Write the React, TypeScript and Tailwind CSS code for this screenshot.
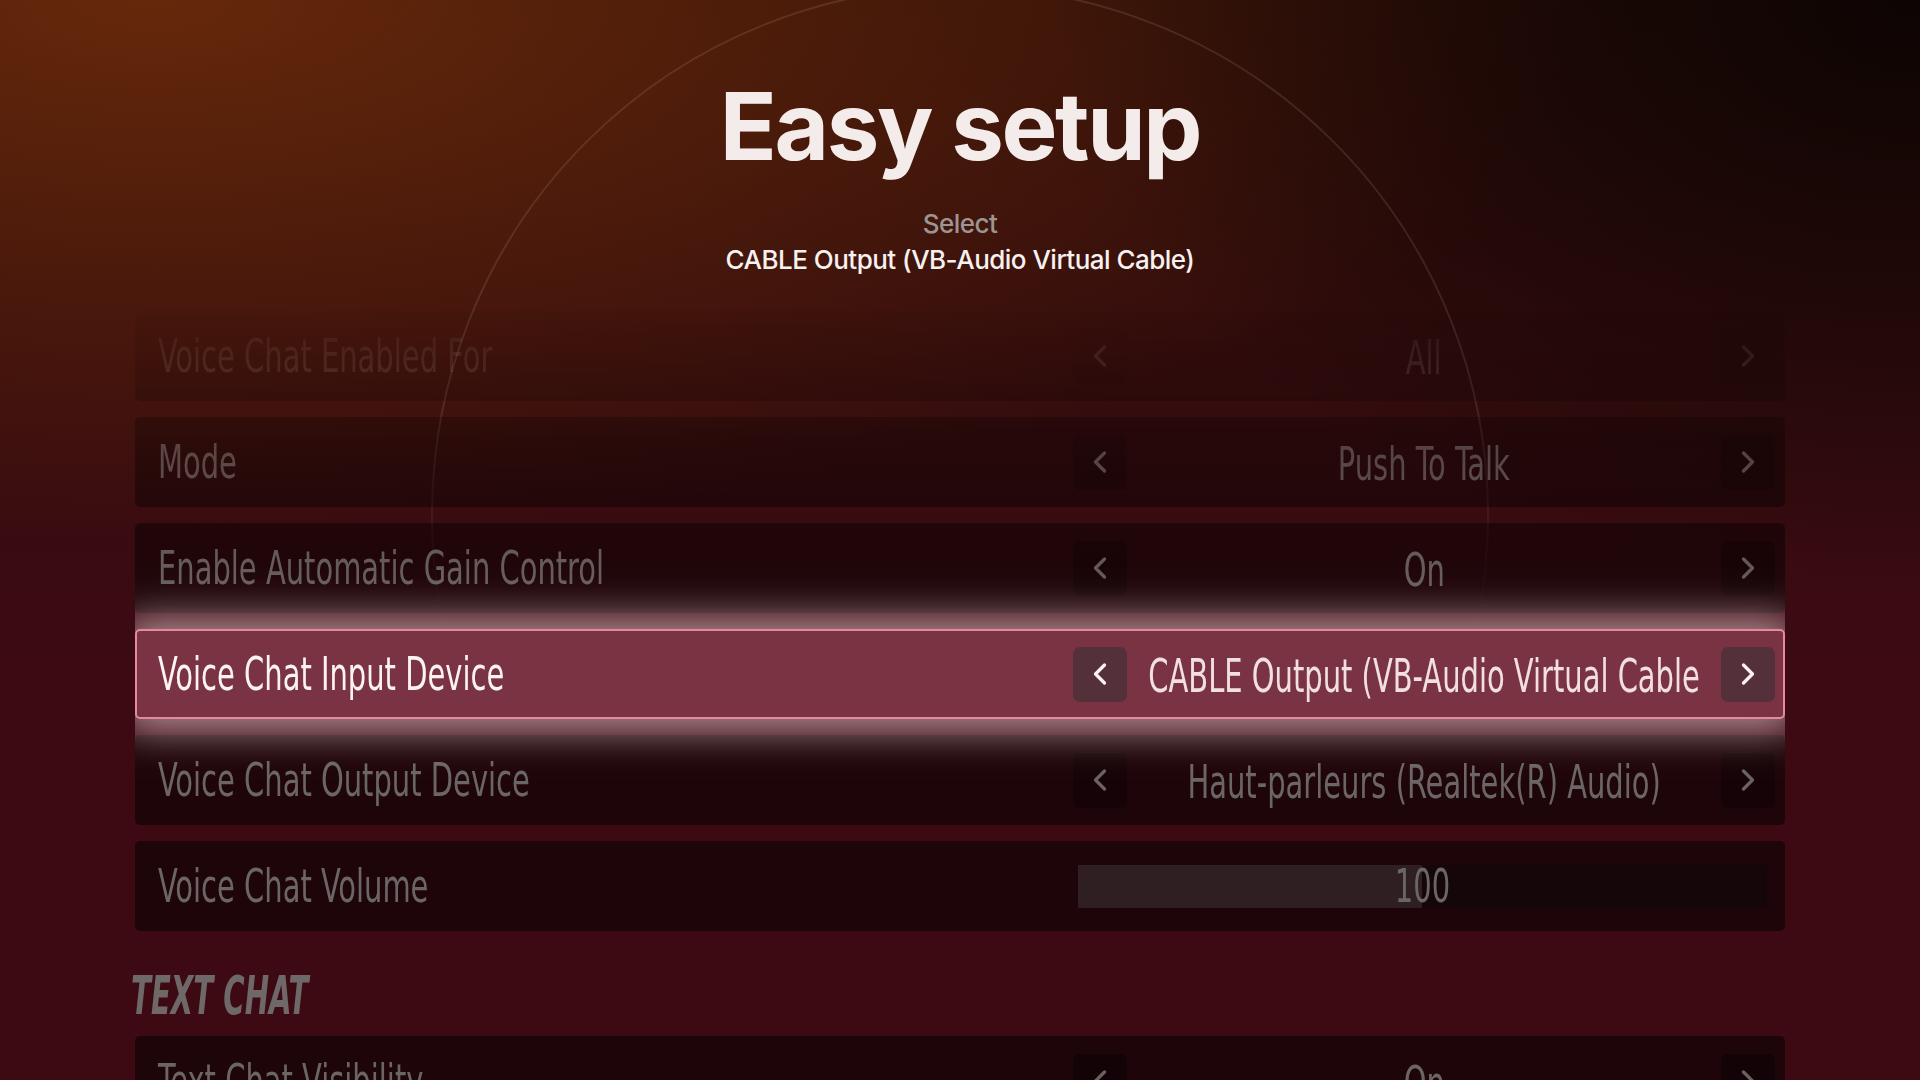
import { ChevronLeft, ChevronRight } from "lucide-react";
import clsx from "clsx";

type RowProps = {
  label: string;
  value?: string;
  active?: boolean;
  volume?: number;
};

const cond = "font-['DejaVu_Sans_Condensed','DejaVu_Sans',sans-serif]";

// arrow button on either side of the value
const Arrow = ({ dir, active }: { dir: "left" | "right"; active?: boolean }) => (
  <div
    className={clsx(
      "flex h-[55px] w-[54px] shrink-0 items-center justify-center rounded-[7px]",
      active ? "bg-[#54303a] text-[#fbf2f3]" : "bg-black/30 text-[#6a6261]"
    )}
  >
    {dir === "left" ? (
      <ChevronLeft size={36} strokeWidth={2.2} />
    ) : (
      <ChevronRight size={36} strokeWidth={2.2} />
    )}
  </div>
);

const Row = ({ label, value, active, volume }: RowProps) => (
  <div
    className={clsx(
      "flex h-[90px] shrink-0 items-center rounded-[5px]",
      active
        ? "relative z-10 border-2 border-[#e58a98] bg-[#793343] pl-[21px] pr-[8px] shadow-[0_0_40px_12px_rgba(255,230,234,0.6)]"
        : "bg-black/50 pl-[23px] pr-[10px]"
    )}
  >
    <span
      className={clsx(
        cond,
        "inline-block origin-left scale-x-[0.7] whitespace-nowrap text-[46px] leading-none",
        active ? "text-[#fbf3f3]" : "text-[#6b6665]"
      )}
    >
      {label}
    </span>

    <div className="ml-auto flex w-[702px] shrink-0 items-center">
      {volume !== undefined ? (
        <div className="ml-[5px] mr-[8px] flex h-[43px] flex-1 items-center justify-center bg-[linear-gradient(to_right,#2f1f22_50%,#150709_50%)]">
          <span
            className={clsx(
              cond,
              "inline-block scale-x-[0.7] text-[46px] leading-none text-[#6b6665]"
            )}
          >
            {volume}
          </span>
        </div>
      ) : (
        <>
          <Arrow dir="left" active={active} />
          <div className="flex min-w-0 flex-1 justify-center pt-1">
            <span
              className={clsx(
                cond,
                "inline-block shrink-0 scale-x-[0.7] whitespace-nowrap text-[46px] leading-none",
                active ? "text-[#f1dfe2]" : "text-[#6b6665]"
              )}
            >
              {value}
            </span>
          </div>
          <Arrow dir="right" active={active} />
        </>
      )}
    </div>
  </div>
);

export default function App() {
  return (
    <div className="relative h-[1080px] w-[1920px] overflow-hidden [background:radial-gradient(ellipse_45%_55%_at_100%_0%,rgba(12,4,3,0.95),transparent),radial-gradient(ellipse_75%_50%_at_8%_0%,rgba(115,46,12,0.82),transparent),linear-gradient(180deg,#2a0d07_0%,#360c0e_40%,#3d0a14_62%,#3d0a14_100%)]">
      {/* faint decorative rings, fading out towards the list */}
      <svg
        className="pointer-events-none absolute inset-0 [mask-image:linear-gradient(to_bottom,#000_0px,#000_420px,transparent_640px)]"
        width="1920"
        height="1080"
        viewBox="0 0 1920 1080"
        fill="none"
      >
        <circle cx="960" cy="515" r="528" stroke="rgba(255,235,225,0.11)" strokeWidth="2" />
        <circle
          cx="962"
          cy="470"
          r="720"
          stroke="rgba(255,235,225,0.03)"
          strokeWidth="2"
          className="[mask-image:linear-gradient(to_bottom,#000_0px,transparent_420px)]"
        />
      </svg>

      <div className="relative flex flex-col">
        <header className="flex flex-col items-center pt-[79px] font-['Inter',sans-serif]">
          <h1 className="text-[94px] font-bold leading-none tracking-[-0.025em] text-[#f4ecea]">
            Easy setup
          </h1>
          <p className="mt-[35px] text-[26px] font-medium leading-[32px] tracking-[-0.02em] text-[#9d9593]">
            Select
          </p>
          <p className="mt-[3px] text-[26px] font-medium leading-[34px] tracking-[-0.02em] text-[#f7f1f0]">
            CABLE Output (VB-Audio Virtual Cable)
          </p>
        </header>

        <div className="mt-[34px] flex flex-col px-[135px]">
          <div className="flex flex-col gap-4 [mask-image:linear-gradient(to_bottom,rgba(0,0,0,0.06)_0px,rgba(0,0,0,0.3)_80px,rgba(0,0,0,0.6)_130px,rgba(0,0,0,0.85)_230px,#000_320px)]">
            <Row label="Voice Chat Enabled For" value="All" />
            <Row label="Mode" value="Push To Talk" />
            <Row label="Enable Automatic Gain Control" value="On" />
            <Row label="Voice Chat Input Device" value="CABLE Output (VB-Audio Virtual Cable" active />
            <Row label="Voice Chat Output Device" value="Haut-parleurs (Realtek(R) Audio)" />
            <Row label="Voice Chat Volume" volume={100} />
          </div>

          <h2
            className={clsx(
              cond,
              "-ml-1 mt-[35px] inline-block origin-left scale-x-[0.6] text-[54px] font-bold italic leading-[60px] text-[#6e6868]"
            )}
          >
            TEXT CHAT
          </h2>

          <div className="mt-[10px] flex flex-col gap-4">
            <Row label="Text Chat Visibility" value="On" />
          </div>
        </div>
      </div>
    </div>
  );
}
